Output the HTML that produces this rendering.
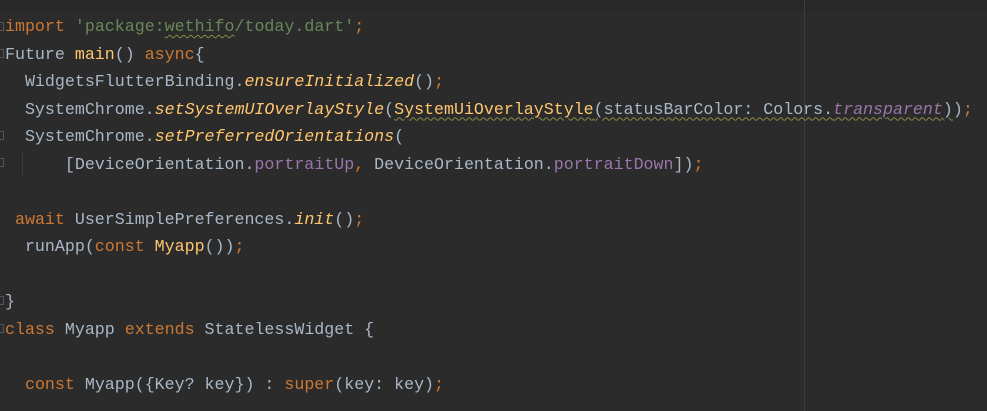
<!DOCTYPE html>
<html><head><meta charset="utf-8"><style>
html,body{margin:0;padding:0;}
body{width:987px;height:411px;background:#2b2b2b;overflow:hidden;position:relative;font-family:"Liberation Mono",monospace;font-size:16.64px;color:#a9b7c6;}
.top{position:absolute;left:0;top:0;width:987px;height:10px;background:#282828;}
.guide{position:absolute;left:804px;top:0;width:1px;height:411px;background:#3c3c3c;}
.code{position:absolute;left:5px;top:13px;white-space:pre;line-height:27.5px;}
.k{color:#cc7832}.s{color:#6a8759}.m{color:#ffc66d;font-style:italic}.f{color:#ffc66d}.p{color:#9876aa}.pi{color:#9876aa;font-style:italic}
.w{text-decoration:underline wavy #8a8a4a;text-underline-offset:3px;text-decoration-thickness:1px}
.fold{position:absolute;left:0;width:4px;height:9px;border:1px solid #555;border-left:none;box-sizing:border-box;}
.ig{position:absolute;left:22px;top:151px;width:1px;height:26px;background:#3a3a3a;}
</style></head><body>
<div class="top"></div>
<div class="guide"></div>
<div class="fold" style="top:22px"></div>
<div class="fold" style="top:49px"></div>
<div class="fold" style="top:131px"></div>
<div class="fold" style="top:158px"></div>
<div class="fold" style="top:296px"></div>
<div class="fold" style="top:324px"></div>
<div class="ig"></div>
<div class="code"><span class="k">import</span> <span class="s">'package:<span class="w">wethifo</span>/today.dart'</span><span class="k">;</span>
Future <span class="f">main</span>() <span class="k">async</span>{
  WidgetsFlutterBinding.<span class="m">ensureInitialized</span>()<span class="k">;</span>
  SystemChrome.<span class="m">setSystemUIOverlayStyle</span>(<span class="w"><span class="f">SystemUiOverlayStyle</span>(statusBarColor: Colors.<span class="pi">transparent</span>)</span>)<span class="k">;</span>
  SystemChrome.<span class="m">setPreferredOrientations</span>(
      [DeviceOrientation.<span class="p">portraitUp</span><span class="k">,</span> DeviceOrientation.<span class="p">portraitDown</span>])<span class="k">;</span>

 <span class="k">await</span> UserSimplePreferences.<span class="m">init</span>()<span class="k">;</span>
  runApp(<span class="k">const</span> <span class="f">Myapp</span>())<span class="k">;</span>

}
<span class="k">class</span> Myapp <span class="k">extends</span> StatelessWidget {

  <span class="k">const</span> Myapp({Key? key}) : <span class="k">super</span>(key: key)<span class="k">;</span></div>
</body></html>
